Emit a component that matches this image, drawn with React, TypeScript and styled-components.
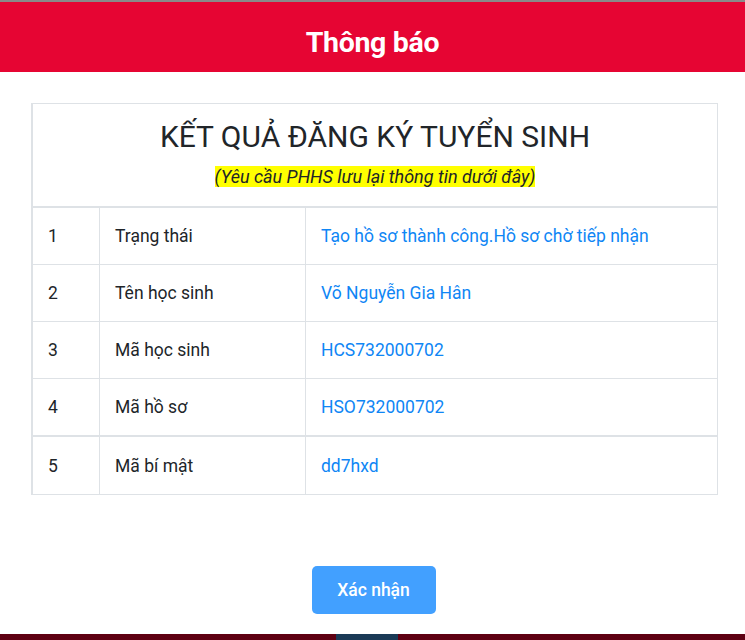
import React from "react";
import styled, { createGlobalStyle } from "styled-components";

const Global = createGlobalStyle`
  html, body { margin: 0; padding: 0; background: #fff; }
  body { font-family: Roboto, "Noto Sans", "Liberation Sans", sans-serif; color: #212529; }
  * { box-sizing: border-box; }
`;

const Page = styled.div`
  width: 745px;
  height: 640px;
  display: flex;
  flex-direction: column;
  overflow: hidden;
  background: #fff;
`;

const TopStrip = styled.div`
  height: 2px;
  background: #8a8a8a;
  flex-shrink: 0;
`;

const Header = styled.header`
  height: 70px;
  flex-shrink: 0;
  background: #e60533;
  display: flex;
  align-items: center;
  justify-content: center;
  padding-top: 10px;
`;

const HeaderTitle = styled.h1`
  margin: 0;
  color: #fff;
  font-size: 28.5px;
  font-weight: 700;
  letter-spacing: -0.3px;
`;

const Body = styled.main`
  flex: 1;
  padding: 31px 27px 0 31px;
  display: flex;
  flex-direction: column;
`;

const Table = styled.div`
  border: 1px solid #dee2e6;
  border-left-width: 2px;
  width: 687px;
`;

const Caption = styled.div`
  height: 104px;
  border-bottom: 2px solid #dee2e6;
  display: flex;
  flex-direction: column;
  align-items: center;
  padding-top: 14px;
`;

const CaptionTitle = styled.h2`
  margin: 0;
  font-size: 30px;
  font-weight: 400;
  line-height: 38px;
  color: #212529;
`;

const Note = styled.span`
  margin-top: 10px;
  font-size: 18px;
  font-style: italic;
  line-height: 21px;
  background: #ffff00;
  color: #212529;
`;

const Row = styled.div<{ $thick?: boolean; $last?: boolean }>`
  display: grid;
  grid-template-columns: 66px 206px 1fr;
  height: ${(p) => (p.$thick ? 58 : 57)}px;
  border-bottom: ${(p) => (p.$last ? "none" : p.$thick ? "2px solid #dee2e6" : "1px solid #dee2e6")};
`;

const Cell = styled.div<{ $value?: boolean }>`
  display: flex;
  align-items: center;
  padding: 0 15px;
  font-size: 17.5px;
  color: ${(p) => (p.$value ? "#0f86f5" : "#212529")};
  & + & { border-left: 1px solid #dee2e6; }
`;

const Footer = styled.div`
  display: flex;
  justify-content: center;
  padding-top: 71px;
  padding-right: 2px;
`;

const Button = styled.button`
  width: 124px;
  height: 48px;
  border: none;
  border-radius: 5px;
  background: #42a0ff;
  color: #fff;
  font-family: Roboto, "Noto Sans", sans-serif;
  font-size: 17.5px;
  font-weight: 500;
  cursor: pointer;
`;

const Backdrop = styled.div`
  height: 6px;
  flex-shrink: 0;
  background: #5e0012;
  display: flex;
  justify-content: center;
`;

const BackdropSpot = styled.div`
  width: 62px;
  margin-left: -12px;
  background: #1a3a56;
`;

const rows = [
  ["1", "Trạng thái", "Tạo hồ sơ thành công.Hồ sơ chờ tiếp nhận"],
  ["2", "Tên học sinh", "Võ Nguyễn Gia Hân"],
  ["3", "Mã học sinh", "HCS732000702"],
  ["4", "Mã hồ sơ", "HSO732000702"],
  ["5", "Mã bí mật", "dd7hxd"],
];

export default function App() {
  return (
    <Page>
      <Global />
      <TopStrip />
      <Header>
        <HeaderTitle>Thông báo</HeaderTitle>
      </Header>
      <Body>
        <Table>
          <Caption>
            <CaptionTitle>KẾT QUẢ ĐĂNG KÝ TUYỂN SINH</CaptionTitle>
            <Note>(Yêu cầu PHHS lưu lại thông tin dưới đây)</Note>
          </Caption>
          {rows.map((r, i) => (
            <Row key={r[0]} $thick={i === 3} $last={i === rows.length - 1}>
              <Cell>{r[0]}</Cell>
              <Cell>{r[1]}</Cell>
              <Cell $value>{r[2]}</Cell>
            </Row>
          ))}
        </Table>
        <Footer>
          <Button>Xác nhận</Button>
        </Footer>
      </Body>
      <Backdrop>
        <BackdropSpot />
      </Backdrop>
    </Page>
  );
}
